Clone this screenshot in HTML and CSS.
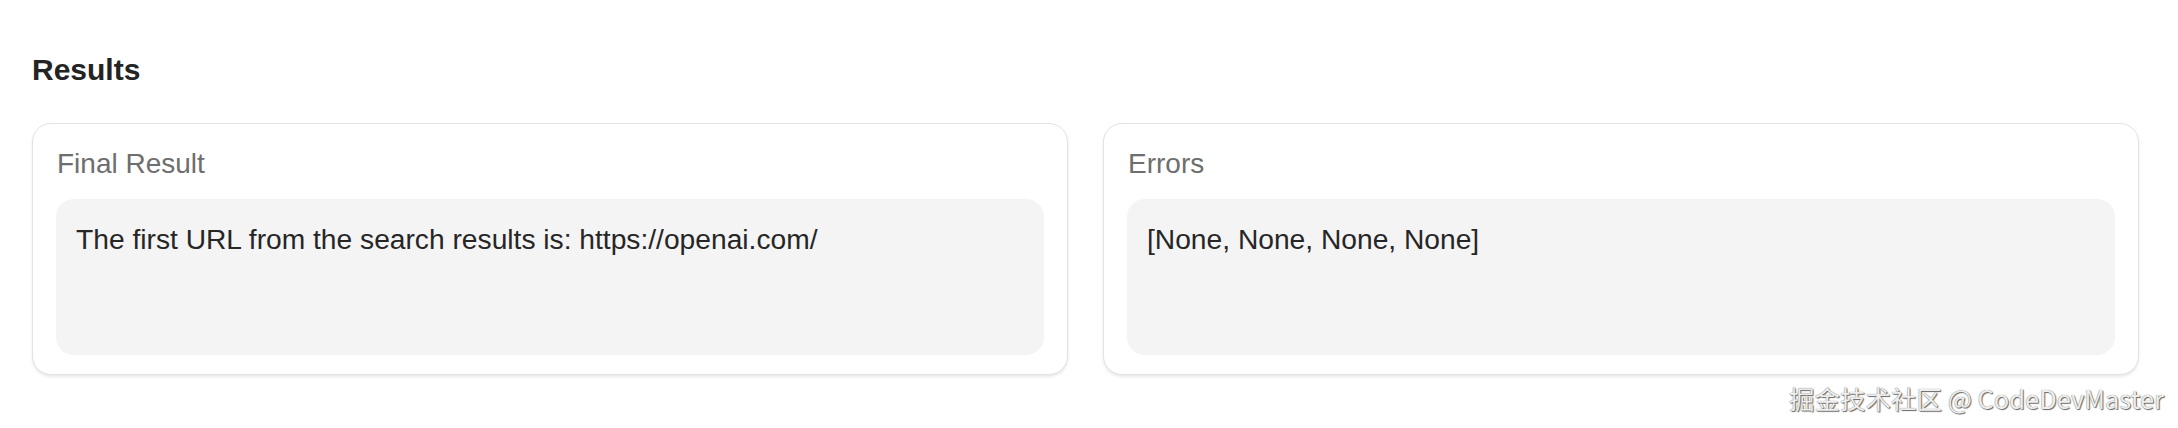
FILE: index.html
```html
<!DOCTYPE html>
<html lang="en">
<head>
<meta charset="utf-8">
<title>Results</title>
<link rel="stylesheet" href="styles.css">
</head>
<body>
<main class="page">
  <h2 class="heading">Results</h2>
  <div class="row">
    <section class="card">
      <div class="label">Final Result</div>
      <div class="box">The first URL from the search results is: https://openai.com/</div>
    </section>
    <section class="card">
      <div class="label">Errors</div>
      <div class="box">[None, None, None, None]</div>
    </section>
  </div>
</main>
<div class="watermark">掘金技术社区 @ CodeDevMaster</div>
</body>
</html>
```
FILE: styles.css
```css
html, body {
  margin: 0;
  padding: 0;
  background: #ffffff;
}
body {
  width: 2178px;
  height: 428px;
  position: relative;
  overflow: hidden;
  font-family: "Liberation Sans", Arial, sans-serif;
}
.page {
  padding: 52px 39px 0 32px;
}
.heading {
  margin: 0;
  font-size: 30px;
  line-height: 35px;
  font-weight: 700;
  color: #242424;
}
.row {
  display: flex;
  gap: 35px;
  margin-top: 36px;
}
.card {
  flex: 1 1 0;
  border: 1px solid #e3e3e3;
  border-radius: 19px;
  background: #ffffff;
  box-shadow: 0 2px 3px rgba(0, 0, 0, 0.09);
  padding: 23px 23px 19px 23px;
  height: 252px;
  box-sizing: border-box;
  display: flex;
  flex-direction: column;
}
.label {
  font-size: 28px;
  line-height: 34px;
  color: #6e6e6e;
  padding-left: 1px;
}
.box {
  margin-top: 18px;
  flex: 1;
  background: #f4f4f4;
  border-radius: 18px;
  padding: 23px 20px;
  font-size: 28.2px;
  line-height: 34px;
  color: #262626;
}
.watermark {
  position: absolute;
  right: 14px;
  top: 383px;
  font-family: "Noto Sans CJK SC", "Noto Sans", sans-serif;
  font-size: 25.5px;
  line-height: 30px;
  color: #eeeeee;
  text-shadow: 0 0 1px #5a5a5a, 1px 1px 1px #6a6a6a;
}
```
